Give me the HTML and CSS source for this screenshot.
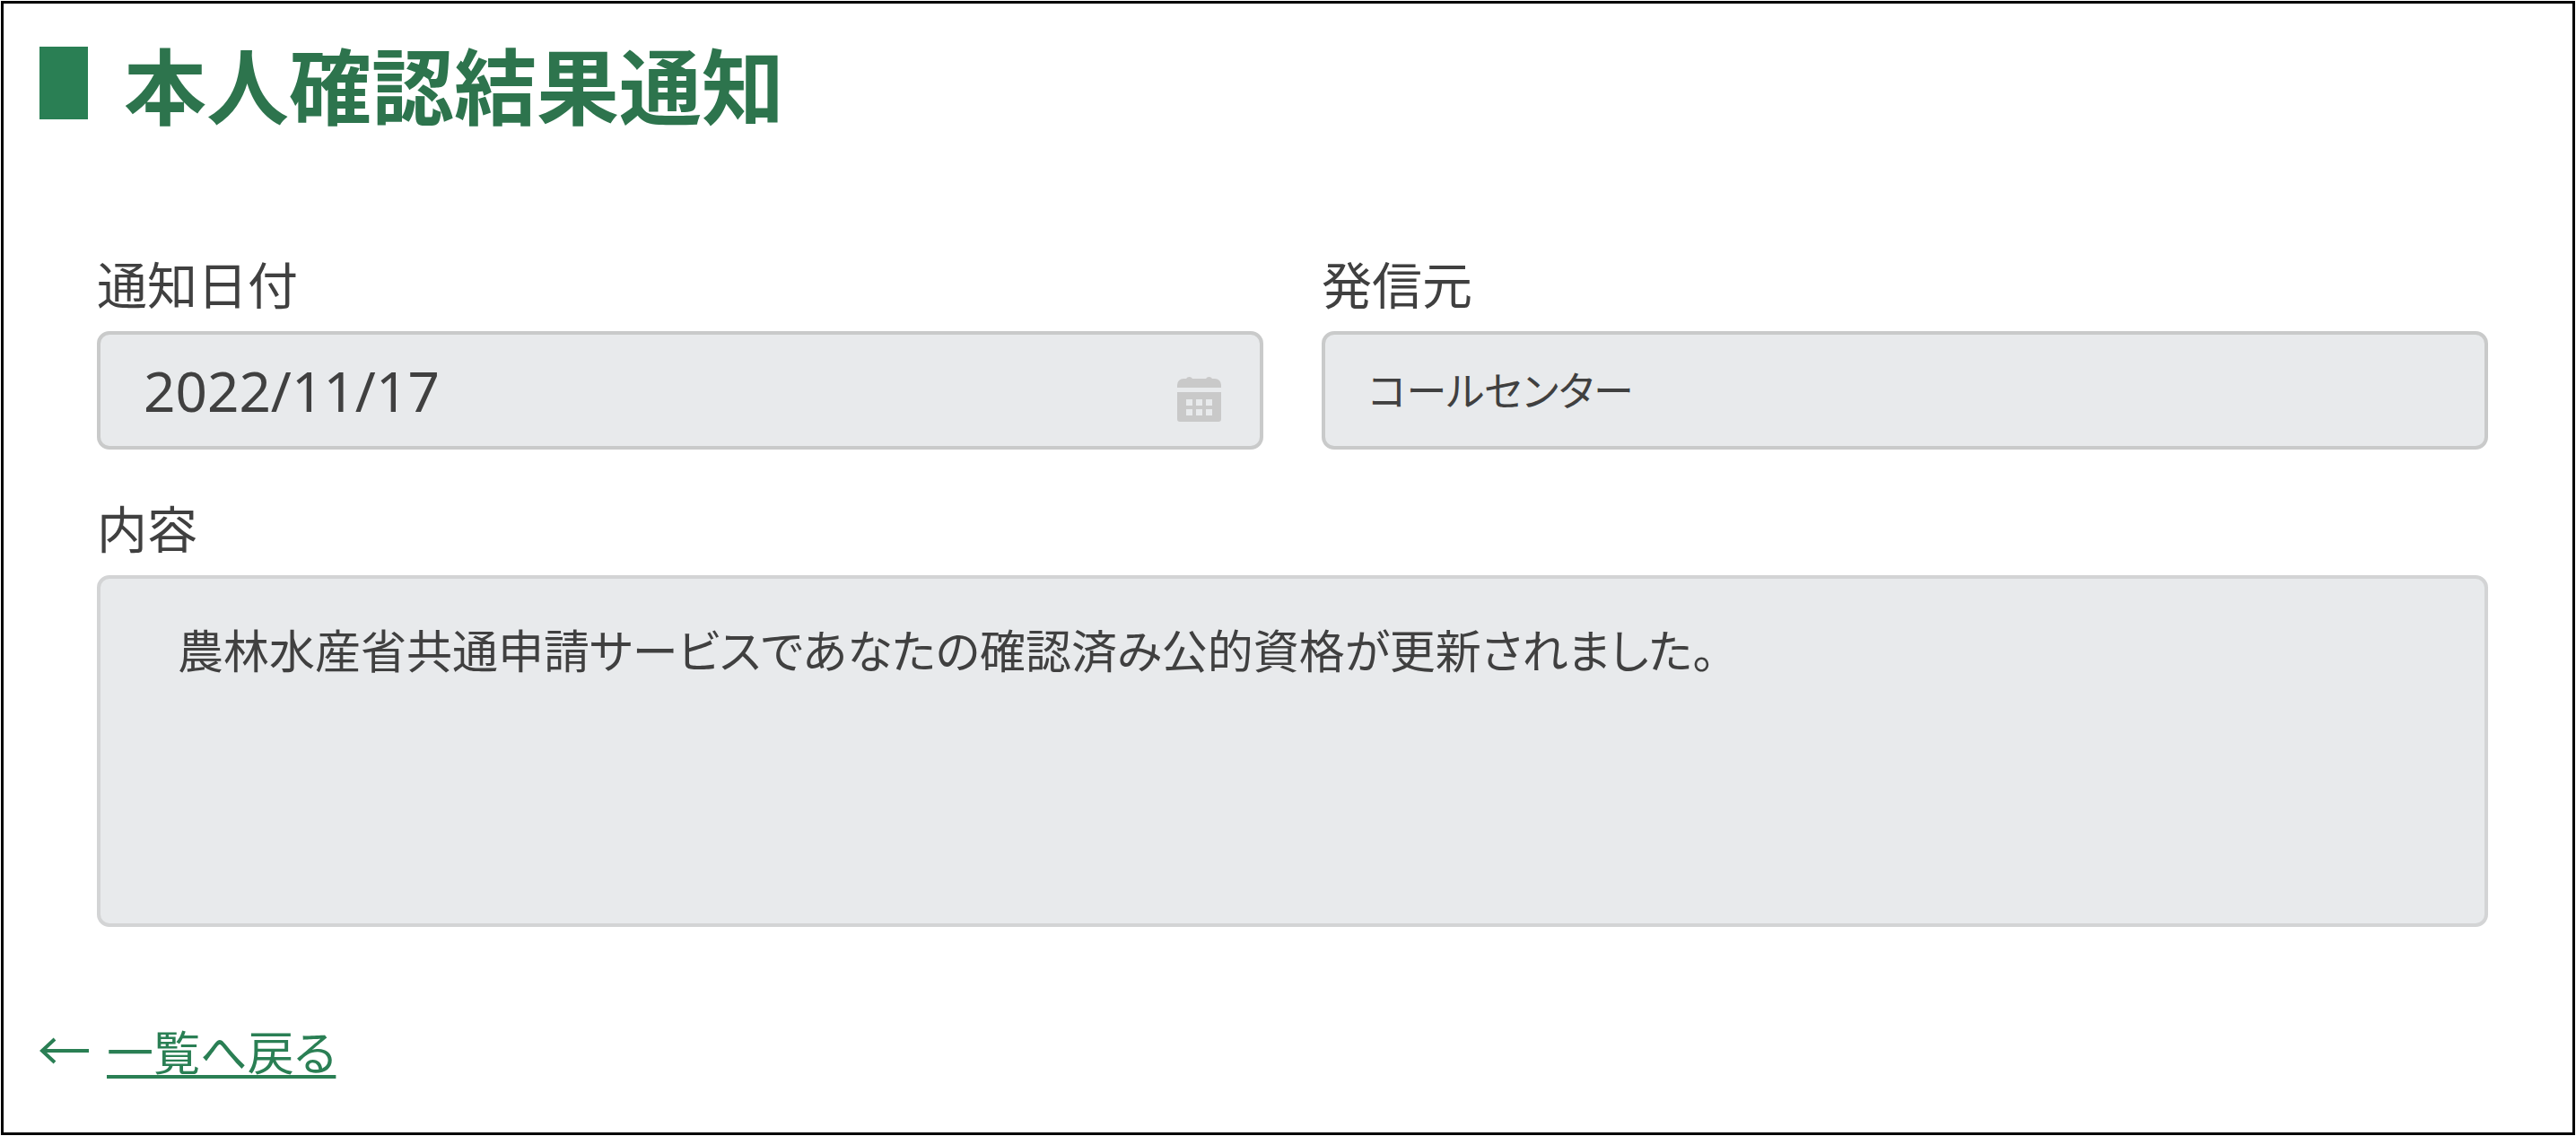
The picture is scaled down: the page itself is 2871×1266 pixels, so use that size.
FILE: index.html
```
<!DOCTYPE html>
<html lang="ja">
  <head>
    <meta charset="UTF-8" />
    <meta name="viewport" content="width=device-width, initial-scale=1.0" />
    <title>本人確認結果通知</title>
    <link rel="stylesheet" href="styles.css">
  </head>
  <body>
    <main class="page">
      <h1 class="page-title">本人確認結果通知</h1>
      <form class="notice">
        <div class="field">
          <label for="notice-date">通知日付</label>
          <div class="date-box">
            <input id="notice-date" type="text" value="2022/11/17" readonly />
            <svg class="calendar" viewBox="0 0 49 52" aria-hidden="true">
              <path d="M0 14V11a7 7 0 0 1 7-7h3a4 4 0 0 1 7 0h15a4 4 0 0 1 7 0h3a7 7 0 0 1 7 7v3z" />
              <path fill-rule="evenodd" d="M0 19h49v30a3 3 0 0 1-3 3H3a3 3 0 0 1-3-3zM10 27v7h7v-7zM21 27v7h7v-7zM32 27v7h7v-7zM10 38v7h7v-7zM21 38v7h7v-7zM32 38v7h7v-7z" />
            </svg>
          </div>
        </div>
        <div class="field">
          <label for="sender">発信元</label>
          <input id="sender" type="text" value="コールセンター" readonly />
        </div>
        <div class="field wide">
          <label for="content">内容</label>
          <textarea id="content" readonly>農林水産省共通申請サービスであなたの確認済み公的資格が更新されました。</textarea>
        </div>
      </form>
      <div class="back">
        <svg class="arrow" viewBox="0 0 56 30" aria-hidden="true">
          <path d="M55 15H3M17 2L3 15l14 13" />
        </svg>
        <a href="#">一覧へ戻る</a>
      </div>
    </main>
  </body>
</html>
```
FILE: styles.css
```
* {
  box-sizing: border-box;
  margin: 0;
  padding: 0;
}
body {
  padding: 1px;
  background-color: #fff;
  color: #404040;
  font-family: "Noto Sans CJK JP", sans-serif;
  font-size: 56px;
  font-feature-settings: "palt";
}
.page {
  min-height: calc(100vh - 2px);
  padding: 36px 94px 32px 40px;
  border: 3px solid #000;
}
.page-title {
  display: flex;
  align-items: center;
  gap: 40px;
  color: #2d744d;
  font-size: 92px;
  font-weight: bold;
  line-height: 104px;
  font-feature-settings: normal;
}
.page-title::before {
  content: "";
  width: 54px;
  height: 81px;
  background-color: #2a7f54;
}
.notice {
  display: grid;
  grid-template-columns: 1fr 1fr;
  gap: 48px 65px;
  margin: 133px 0 0 64px;
}
.field {
  display: flex;
  flex-direction: column;
}
.wide {
  grid-column: 1 / 3;
}
label {
  height: 92px;
  line-height: 76px;
  font-feature-settings: normal;
}
input,
textarea {
  display: block;
  width: 100%;
  border: 4px solid #c9caca;
  border-radius: 14px;
  background-color: #e8eaec;
  color: inherit;
  font: inherit;
  font-size: 51px;
  font-feature-settings: inherit;
  outline: none;
}
input {
  height: 132px;
  padding: 0 48px;
}
#sender {
  padding-bottom: 4px;
  font-size: 45px;
}
.date-box {
  position: relative;
}
#notice-date {
  font-family: "Noto Sans", "Noto Sans CJK JP", sans-serif;
  font-size: 62px;
}
/* icon lies over the right end of the date box */
.calendar {
  position: absolute;
  top: 49px;
  right: 47px;
  width: 49px;
  height: 52px;
  fill: #c9c9c9;
}
textarea {
  height: 392px;
  padding: 38px 86px;
  border-color: #d3d4d5;
  line-height: 80px;
  resize: none;
}
.back {
  display: flex;
  align-items: center;
  gap: 19px;
  margin-top: 98px;
}
.arrow {
  width: 56px;
  height: 30px;
  fill: none;
  stroke: #2a7f54;
  stroke-width: 4;
}
a {
  color: #2a7f54;
  font-size: 52px;
  line-height: 80px;
  text-decoration-thickness: 4px;
  text-underline-offset: 5px;
  text-decoration-skip-ink: none;
}
```
